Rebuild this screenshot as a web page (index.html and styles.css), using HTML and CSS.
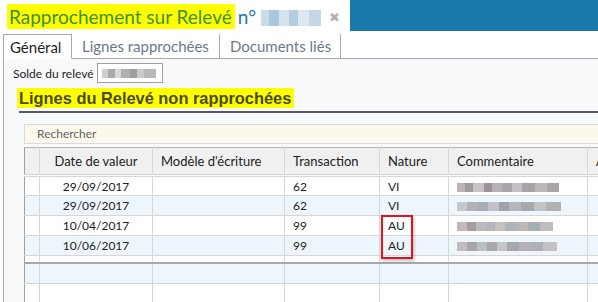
FILE: index.html
```html
<!DOCTYPE html>
<html lang="fr">
<head>
<meta charset="utf-8">
<title>Rapprochement sur Relevé</title>
<link rel="stylesheet" href="styles.css">
</head>
<body>
<div class="window">
  <header class="titlebar">
    <div class="title-area">
      <span class="title-hl">Rapprochement sur Relevé</span>
      <span class="title-no">n°</span>
      <span class="blur blur-title"></span>
      <span class="close">&#x2716;</span>
    </div>
    <div class="blue-bar"></div>
  </header>

  <nav class="tabs">
    <div class="tab active">Général</div>
    <div class="tab">Lignes rapprochées</div>
    <div class="tab">Documents liés</div>
    <div class="tab-rest"></div>
  </nav>

  <main class="panel">
    <div class="solde-row">
      <span class="solde-label">Solde du relevé</span>
      <span class="solde-box"><span class="blur blur-solde"></span></span>
    </div>

    <h2 class="section-title"><span class="section-hl">Lignes du Relevé non rapprochées</span></h2>

    <div class="search">Rechercher</div>

    <div class="grid-wrap">
      <table class="grid">
        <colgroup>
          <col class="c0"><col class="c1"><col class="c2"><col class="c3"><col class="c4"><col class="c5"><col class="c6">
        </colgroup>
        <thead>
          <tr>
            <th></th>
            <th class="center">Date de valeur</th>
            <th>Modèle d'écriture</th>
            <th>Transaction</th>
            <th>Nature</th>
            <th>Commentaire</th>
            <th>A</th>
          </tr>
        </thead>
        <tbody>
          <tr>
            <td></td><td class="center">29/09/2017</td><td></td><td>62</td><td>VI</td>
            <td><span class="blur blur-c1"></span></td><td></td>
          </tr>
          <tr class="alt">
            <td></td><td class="center">29/09/2017</td><td></td><td>62</td><td>VI</td>
            <td><span class="blur blur-c2"></span></td><td></td>
          </tr>
          <tr>
            <td></td><td class="center">10/04/2017</td><td></td><td>99</td><td>AU</td>
            <td><span class="blur blur-c3"></span></td><td></td>
          </tr>
          <tr class="alt">
            <td></td><td class="center">10/06/2017</td><td></td><td>99</td><td>AU</td>
            <td><span class="blur blur-c4"></span></td><td></td>
          </tr>
          <tr class="spacer">
            <td></td><td></td><td></td><td></td><td></td><td></td><td></td>
          </tr>
          <tr class="total">
            <td></td><td></td><td></td><td></td><td></td><td></td><td></td>
          </tr>
          <tr class="empty">
            <td></td><td></td><td></td><td></td><td></td><td></td><td></td>
          </tr>
        </tbody>
      </table>
      <div class="highlight-box"></div>
    </div>
  </main>
</div>
</body>
</html>
```

FILE: styles.css
```css
* { box-sizing: border-box; }

html, body {
  margin: 0;
  padding: 0;
  width: 598px;
  height: 302px;
  overflow: hidden;
  background: #ffffff;
  font-family: Lato, "Open Sans", sans-serif;
  color: #222;
}

.window {
  display: flex;
  flex-direction: column;
  height: 302px;
}

/* Title bar */
.titlebar {
  display: flex;
  height: 31px;
  flex: none;
}

.title-area {
  flex: 1;
  display: flex;
  align-items: center;
  padding-left: 7px;
}

.title-hl {
  background: #ffff00;
  color: #3f8f2a;
  font-size: 19px;
  line-height: 25px;
  padding: 0 3px 0 2px;
  margin-top: 2px;
}

.title-no {
  color: #2277aa;
  font-size: 19px;
  margin-left: 3px;
  margin-top: 2px;
}

.close {
  color: #b4b4b4;
  font-size: 13px;
  margin-left: 8px;
  margin-top: 2px;
}

.blue-bar {
  width: 248px;
  background: #1a79a9;
}

/* Tabs */
.tabs {
  display: flex;
  height: 28px;
  flex: none;
  padding-top: 3px;
  padding-left: 3px;
}

.tab {
  font-size: 15px;
  color: #6b7a8a;
  padding: 0 0 0 10px;
  line-height: 24px;
  white-space: nowrap;
  border-right: 1px solid #a8a8a8;
  border-bottom: 1px solid #a8a8a8;
}

.tab:nth-child(2) { width: 148px; }
.tab:nth-child(3) { width: 121px; }

.tab.active {
  width: 69px;
  color: #1e1e1e;
  background: #fff;
  border: 1px solid #a8a8a8;
  border-bottom: 1px solid #fff;
  padding-left: 6px;
}

.tab-rest {
  flex: 1;
  border-bottom: 1px solid #a8a8a8;
}

/* Panel */
.panel {
  flex: 1;
  margin-left: 3px;
  border-left: 1px solid #a8a8a8;
  background: #f8f9fb;
  padding-top: 4px;
}

.solde-row {
  display: flex;
  align-items: center;
  padding-left: 9px;
  height: 20px;
}

.solde-label {
  font-size: 12px;
  color: #1e1e1e;
  width: 84px;
  white-space: nowrap;
}

.solde-box {
  width: 66px;
  height: 20px;
  background: #fff;
  border: 1px solid #a0a0a0;
  display: flex;
  align-items: center;
  padding-left: 4px;
}

.section-title {
  margin: 5px 0 0 15px;
  padding-bottom: 3px;
  border-bottom: 2px solid #555b60;
  font-family: "Liberation Sans", Arial, sans-serif;
  font-weight: bold;
  font-size: 16.4px;
  line-height: 20px;
}

.section-hl {
  background: #ffff00;
  color: #4a4a14;
  padding: 0 3px 0 2px;
  margin-left: -2px;
  display: inline-block;
}

.search {
  margin: 11px 0 0 20px;
  height: 20px;
  background: #fdf8ec;
  border: 1px solid #d3dbe3;
  border-right: none;
  font-size: 12px;
  color: #666;
  line-height: 18px;
  padding-left: 12px;
}

/* Grid */
.grid-wrap {
  position: relative;
  margin: 3px 0 0 20px;
}

.grid {
  border-collapse: collapse;
  table-layout: fixed;
  width: 620px;
  font-size: 12px;
  border-top: 1px solid #b4b4b4;
  border-left: 1px solid #a0a0a0;
}

.c0 { width: 15px; }
.c1 { width: 113px; }
.c2 { width: 132px; }
.c3 { width: 95px; }
.c4 { width: 69px; }
.c5 { width: 139px; }
.c6 { width: 57px; }

.grid th {
  background: #f0f0f0;
  font-weight: normal;
  text-align: left;
  height: 28px;
  padding: 0 0 0 8px;
  font-size: 13px;
  color: #222;
  border-right: 1px solid #d6d6d6;
  border-bottom: 3px double #d6d6d6;
  white-space: nowrap;
  overflow: hidden;
}

.grid td {
  height: 20px;
  padding: 0 0 0 8px;
  border-right: 1px solid #d6d6d6;
  border-bottom: 1px solid #d6d6d6;
  background: #fff;
  white-space: nowrap;
  overflow: hidden;
}

.grid th.center, .grid td.center {
  text-align: center;
  padding: 0;
}

.grid tr.alt td { background: #eef6fd; }

.grid tr.spacer td {
  height: 7px;
  border-bottom: none;
}

.grid tr.total td {
  height: 21px;
  background: #eef6fd;
  border-top: 2px solid #a9a9a9;
}

.grid tr.empty td {
  height: 20px;
  border-bottom: none;
}

.highlight-box {
  position: absolute;
  left: 357px;
  top: 68px;
  width: 32px;
  height: 44px;
  border: 2px solid #e0141a;
  box-shadow: 1px 2px 3px rgba(0,0,0,0.25);
}

/* Pixelated (blurred) content */
.blur {
  display: inline-block;
  height: 9px;
  filter: blur(0.6px);
  vertical-align: middle;
}

.blur-title {
  width: 60px;
  height: 16px;
  margin-left: 5px;
  margin-top: 4px;
  background: linear-gradient(90deg, #c9dcea 0 14%, #a9c7de 14% 30%, #d4e3ee 30% 46%, #b4cde0 46% 62%, #dde8f0 62% 80%, #c4d7e6 80% 100%);
}

.blur-solde {
  width: 54px;
  background: linear-gradient(90deg, #cfcfcf 0 12%, #a9a9a9 12% 24%, #d8d8d8 24% 36%, #b0b0b0 36% 52%, #9e9e9e 52% 64%, #c9c9c9 64% 78%, #b8b8b8 78% 100%);
}

.blur-c1 {
  width: 102px;
  background: linear-gradient(90deg, #bcb4b8 0 8%, #a29a9e 8% 16%, #c8c2c4 16% 26%, #9e9298 26% 34%, #b8b0b4 34% 44%, #a8a6aa 44% 54%, #c4bfc2 54% 64%, #a9a2a6 64% 76%, #bdb8ba 76% 88%, #aaa6a8 88% 100%);
}

.blur-c2 {
  width: 104px;
  background: linear-gradient(90deg, #c4c8cc 0 10%, #b0b2b8 10% 20%, #a8acb4 20% 30%, #c0c2c6 30% 40%, #9fa2a8 40% 50%, #b4b8bc 50% 62%, #a6a9ae 62% 74%, #c2c4c8 74% 86%, #b0b2b6 86% 100%);
}

.blur-c3 {
  width: 96px;
  background: linear-gradient(90deg, #c4b8bc 0 10%, #a89ca2 10% 20%, #bcb8bc 20% 30%, #b2b6bc 30% 40%, #c6c2be 40% 50%, #aeb4bc 50% 62%, #bcb8b4 62% 74%, #a8acb4 74% 86%, #c0bcbc 86% 100%);
}

.blur-c4 {
  width: 100px;
  background: linear-gradient(90deg, #c2bcc0 0 10%, #a8a4aa 10% 20%, #b8c0c4 20% 30%, #a9a6ac 30% 40%, #c6c6c8 40% 50%, #a4a8ac 50% 62%, #b8b0b8 62% 74%, #aeb2b6 74% 86%, #c4c2c6 86% 100%);
}
```
